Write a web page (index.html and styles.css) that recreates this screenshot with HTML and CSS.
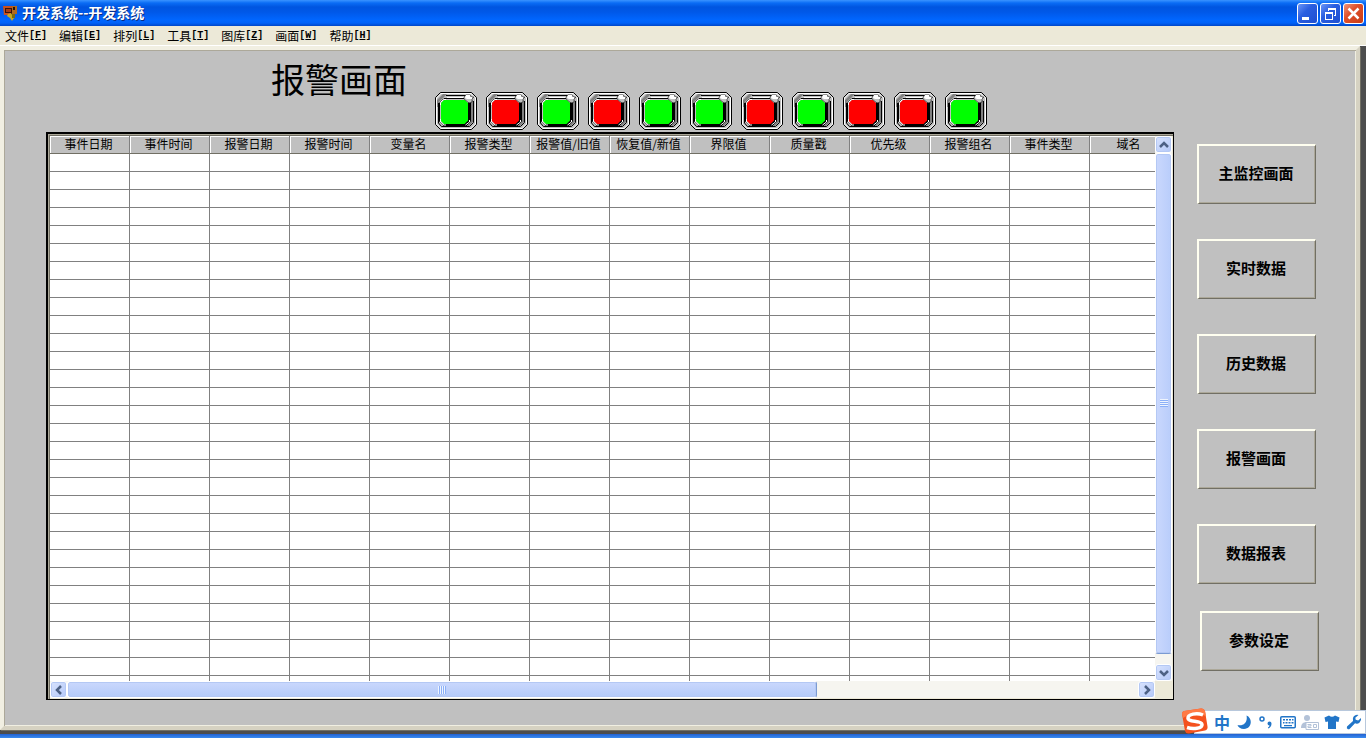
FILE: index.html
```
<!DOCTYPE html>
<html lang="zh-CN">
<head>
  <meta charset="utf-8">
  <meta name="viewport" content="width=device-width, initial-scale=1">
  <title>开发系统--开发系统</title>
  <link rel="stylesheet" href="styles.css">
</head>
<body>
  <svg class="defs" aria-hidden="true">
    <symbol id="lamp" viewBox="0 0 42 38">
      <path d="M5.500.5h31l5 5v27l-5 5h-31l-5-5v-27z" fill="#c0c0c0" stroke="#000"/>
      <path d="M6 1.500h30l4.500 4.500v26L36 36.500H6L1.500 32V6z" fill="none" stroke="#fff"/>
      <path d="M2 8l6-6h4L4 10v5H2z" fill="#808080"/>
      <path d="M36 9l2-1v22l-4 4h-2l4-5z" fill="#808080"/>
      <path d="M11 3.500h20M3.500 11v20l3 3.500h28l4-4V9" fill="none" stroke="#000"/>
      <path d="M12 5.500h18" stroke="#fff"/>
      <path d="M9 6.500h22l4.500 4.500v18.500L31 34H9l-4.500-4.500V11z" fill="#c0c0c0" stroke="#000"/>
      <path d="M9 8h21l3 3v18l-3 3H9l-3-3V11z" fill="currentColor"/>
      <path d="M34 10v19l-4 4H9" fill="none" stroke="#000" stroke-width="2"/>
      <path d="M5.500 13v-2.500l3-3H11M5.500 27v3l3 3H11M34.500 28v2l-4 3" fill="none" stroke="#fff"/>
      <path d="M31 3h4l1.500 2H39l-2 2v3l-3 1-5-4V5z" fill="#c0c0c0" stroke="#000" stroke-width=".5"/>
      <path d="M31 3h4v2h2v2h-5l-2-1z" fill="#fff"/>
    </symbol>
    <symbol id="chevron" viewBox="0 0 10 10">
      <path d="M1 7l4-4 4 4" fill="none" stroke="#4d6185" stroke-width="2.500"/>
    </symbol>
  </svg>

  <header class="titlebar">
    <svg class="app-icon" viewBox="0 0 16 16">
      <path d="M1 1h9v9H1z" fill="#3a1408"/>
      <path d="M0 1h10v2H2v5h6v2H1z" fill="#c8501e"/>
      <path d="M3 4h5v3H3z" fill="#a83c14"/>
      <path d="M9 1h5v8H9z" fill="#b06a20"/>
      <path d="M10 2h2v3h-2z" fill="#2a1008"/>
      <path d="M5 9l3-1 3 5-2 3-2-3-3-2z" fill="#c8a820"/>
      <path d="M9 9h3v4H9z" fill="#7a6a10"/>
    </svg>
    <h1>开发系统--开发系统</h1>
    <div class="window-buttons">
      <button type="button" aria-label="最小化"><svg viewBox="0 0 19 19"><path d="M4 13h7v3H4z" fill="#fff"/></svg></button>
      <button type="button" aria-label="还原"><svg viewBox="0 0 19 19"><path d="M4 8h8v8H4zm1 2v5h6v-5zM7 4h8v8h-2v-1h1V6H8v1H7z" fill="#fff" fill-rule="evenodd"/></svg></button>
      <button type="button" class="close" aria-label="关闭"><svg viewBox="0 0 19 19"><path d="M4.500 4.500l10 10M14.500 4.500l-10 10" fill="none" stroke="#fff" stroke-width="2.500"/></svg></button>
    </div>
  </header>

  <nav class="menubar">
    <button type="button">文件<span>[<u>F</u>]</span></button>
    <button type="button">编辑<span>[<u>E</u>]</span></button>
    <button type="button">排列<span>[<u>L</u>]</span></button>
    <button type="button">工具<span>[<u>T</u>]</span></button>
    <button type="button">图库<span>[<u>Z</u>]</span></button>
    <button type="button">画面<span>[<u>W</u>]</span></button>
    <button type="button">帮助<span>[<u>H</u>]</span></button>
  </nav>

  <div class="workspace">
    <main class="screen">
      <section class="alarms">
        <div class="alarm-head">
          <h2>报警画面</h2>
          <div class="lamps">
            <svg class="lamp on"><use href="#lamp"/></svg>
            <svg class="lamp off"><use href="#lamp"/></svg>
            <svg class="lamp on"><use href="#lamp"/></svg>
            <svg class="lamp off"><use href="#lamp"/></svg>
            <svg class="lamp on"><use href="#lamp"/></svg>
            <svg class="lamp on"><use href="#lamp"/></svg>
            <svg class="lamp off"><use href="#lamp"/></svg>
            <svg class="lamp on"><use href="#lamp"/></svg>
            <svg class="lamp off"><use href="#lamp"/></svg>
            <svg class="lamp off"><use href="#lamp"/></svg>
            <svg class="lamp on"><use href="#lamp"/></svg>
          </div>
        </div>

        <div class="grid-box">
          <div class="grid-view">
            <table>
              <thead>
                <tr>
                  <th>事件日期</th>
                  <th>事件时间</th>
                  <th>报警日期</th>
                  <th>报警时间</th>
                  <th>变量名</th>
                  <th>报警类型</th>
                  <th>报警值/旧值</th>
                  <th>恢复值/新值</th>
                  <th>界限值</th>
                  <th>质量戳</th>
                  <th>优先级</th>
                  <th>报警组名</th>
                  <th>事件类型</th>
                  <th>域名</th>
                </tr>
              </thead>
              <tbody id="alarm-rows"></tbody>
            </table>
          </div>
          <div class="scroll vertical">
            <button type="button" aria-label="向上"><svg><use href="#chevron"/></svg></button>
            <div class="track"><div class="thumb"><i></i></div></div>
            <button type="button" class="down" aria-label="向下"><svg><use href="#chevron"/></svg></button>
          </div>
          <div class="scroll horizontal">
            <button type="button" class="left" aria-label="向左"><svg><use href="#chevron"/></svg></button>
            <div class="track"><div class="thumb"><i></i></div></div>
            <button type="button" class="right" aria-label="向右"><svg><use href="#chevron"/></svg></button>
          </div>
        </div>
      </section>

      <nav class="pages">
        <div class="page-group">
          <button type="button">主监控画面</button>
          <button type="button">实时数据</button>
          <button type="button">历史数据</button>
          <button type="button">报警画面</button>
          <button type="button">数据报表</button>
        </div>
        <div class="page-group settings">
          <button type="button">参数设定</button>
        </div>
      </nav>
    </main>
  </div>

  <div class="taskbar"></div>

  <div class="ime">
    <svg class="ime-logo" viewBox="0 0 28 28">
      <path d="M3 4q-2 .5-2 3l3 17q1 3 4 2.500l16-3q3-1 2.500-4L24 4q-1-3-4-2.500z" fill="#f4511e"/>
      <path d="M3 4L20 1.500q3-.5 4 2.500l1 5Q12 4 2 11l-1-4q0-2.500 2-3z" fill="#ff7a45"/>
      <path d="M22 8C16 5.500 6.500 7 7 11.500c.5 4 13.500 1.500 14 6 .5 4-9 5-15 3" fill="none" stroke="#fff" stroke-width="3.500"/>
    </svg>
    <button type="button" class="lang">中</button>
    <button type="button" aria-label="半角"><svg viewBox="0 0 16 16"><path d="M10.500 1.500C17 4 16 15 8 15 4.500 15 2 13 1.500 11c6 1.500 10.500-3 9-9.500z"/></svg></button>
    <button type="button" aria-label="标点"><svg viewBox="0 0 16 16"><circle cx="4" cy="5" r="2" fill="none" stroke="#2175c8" stroke-width="1.500"/><path d="M9.500 9.500a2 2 0 1 1 4 0c0 2.500-1 4-3.500 5v-1c1-.5 1.500-1.200 1.500-2-1 0-2-1-2-2z"/></svg></button>
    <button type="button" aria-label="软键盘"><svg viewBox="0 0 16 16"><rect x=".75" y="2.750" width="14.500" height="11" rx="1" fill="none" stroke="#2175c8" stroke-width="1.500"/><path d="M3 5h2v1.500H3zM6 5h2v1.500H6zM9 5h2v1.500H9zM12 5h1.500v1.500H12zM3 8h1.500v1.500H3zM5.500 8h2v1.500h-2zM8.500 8h2v1.500h-2zM11.500 8h2v1.500h-2zM4 11h8v1.200H4z"/></svg></button>
    <button type="button" aria-label="账号"><svg class="user" viewBox="0 0 18 16"><circle cx="6" cy="4" r="3"/><path d="M0 14c0-4 2-6 6-6s5 1 5 3v3z"/><path d="M5 8.500h12.500v7H5z" fill="#fff" stroke="#b3c2d8"/><path d="M6.500 10.500h3.500v1.500H7v1.500h3.500M12.500 10.500h3v3h-3z" fill="none" stroke="#b3c2d8"/></svg></button>
    <button type="button" aria-label="皮肤"><svg viewBox="0 0 16 16"><path d="M5 1.500q3 2.500 6 0l4.500 2L14.500 8 12 7.500V15H4V7.500L1.500 8 .5 3.500z"/></svg></button>
    <button type="button" aria-label="工具箱"><svg viewBox="0 0 16 16"><path d="M12.500 1a4.500 4.500 0 0 0-5.500 6L1 12.500q-.8 2 1 2.700 1 .4 1.800-.5L9 9.300A4.500 4.500 0 0 0 15 4l-2.800 2.500-2.500-.7-.4-2z"/></svg></button>
  </div>

  <script src="grid.js"></script>
</body>
</html>
```
FILE: styles.css
```
*, :after, :before { box-sizing: border-box; }
body {
  background: #4d4d4d;
  color: #000;
  display: flex;
  flex-direction: column;
  font-family: "Noto Sans CJK SC", "Liberation Sans", sans-serif;
  font-size: 12px;
  height: 100vh;
  line-height: 16px;
  margin: 0;
  overflow: hidden;
}
button {
  border: 0;
  color: inherit;
  font: inherit;
  margin: 0;
  padding: 0;
}
h1, h2 { margin: 0; }
svg { display: block; }
.defs {
  height: 0;
  position: absolute;
  width: 0;
}

/* title bar */
.titlebar {
  align-items: center;
  background: linear-gradient(#3a93ff 0, #0a6cf5 3px, #0055e0 7px, #0058e8 12px, #0066ff 20px, #0062f8 23px, #0046c8 26px);
  display: flex;
  flex: none;
  height: 26px;
  padding: 0 2px 0 3px;
}
.app-icon {
  height: 16px;
  margin-right: 3px;
  width: 16px;
}
.titlebar h1 {
  color: #fff;
  flex: 1;
  font-size: 14px;
  font-weight: 700;
  line-height: 20px;
  padding-bottom: 2px;
  text-shadow: 1px 1px #0a2a80;
}
.window-buttons {
  display: flex;
  gap: 2px;
}
.window-buttons button {
  background: linear-gradient(135deg, #6a96f8, #2a5ee0 40%, #1e4fd0);
  border: 1px solid #fff;
  border-radius: 3px;
  height: 21px;
  width: 21px;
}
.window-buttons .close { background: linear-gradient(135deg, #f0957a, #e0502c 40%, #c83c14); }

/* menu bar */
.menubar {
  background: #ece9d8;
  display: flex;
  flex: none;
  gap: 12px;
  height: 19px;
  padding: 0 5px;
}
.menubar button {
  background: none;
  display: flex;
  line-height: 19px;
}
.menubar span {
  font-family: "Liberation Mono", monospace;
  font-size: 10px;
  font-weight: 700;
  line-height: 20px;
}

/* picture area */
.workspace {
  border-top: 1px solid #fff;
  display: flex;
  flex: 1;
  min-height: 0;
  padding: 0 6px 4px 0;
}
.screen {
  background: #c0c0c0;
  border: solid;
  border-color: #f1efe2 #d6d2c2 #d6d2c2 #f1efe2;
  border-width: 4px;
  box-shadow: 1px 1px #716f64, inset 1px 1px #aca899, inset -1px -1px #f1efe2;
  display: flex;
  flex: 1;
  gap: 23px;
  min-width: 0;
  padding: 0 37px 26px 42px;
}
.alarms {
  display: flex;
  flex: 1;
  flex-direction: column;
  min-width: 0;
}
.alarm-head {
  display: flex;
  flex: none;
  gap: 28px;
  padding: 12px 0 2px 225px;
}
.alarm-head h2 {
  font-size: 34px;
  font-weight: 400;
  line-height: 34px;
}
.lamps {
  display: flex;
  gap: 9px;
  padding-top: 30px;
}
.lamp {
  height: 38px;
  width: 42px;
}
.lamp.on { color: #0f0; }
.lamp.off { color: #f00; }

.grid-box {
  background: #ece9d8;
  border: solid #000;
  border-width: 2px 1px 1px 2px;
  box-shadow: inset 1px 1px #aca899, inset 2px 2px #716f64;
  display: grid;
  flex: 1;
  grid-template-columns: 1fr 17px;
  grid-template-rows: 1fr 17px;
  min-height: 0;
  padding: 2px 1px 1px 2px;
}
.grid-view {
  background: #fff;
  min-height: 0;
  min-width: 0;
  overflow: hidden;
}
table {
  border-collapse: separate;
  border-spacing: 0;
  table-layout: fixed;
  width: 1120px;
}
th, td {
  border-bottom: 1px solid #808080;
  border-right: 1px solid #808080;
  height: 18px;
  padding: 0;
}
th {
  background: #c0c0c0;
  border-bottom-color: #716f64;
  box-shadow: inset 1px 1px #fff;
  font-weight: 400;
  line-height: 15px;
  padding: 0 2px 2px 0;
  white-space: nowrap;
}

/* scroll bars */
.scroll {
  background: #f6f5f0;
  display: flex;
}
.scroll button, .thumb {
  background: linear-gradient(135deg, #d8e3fe, #b4c8f8);
  border: 1px solid #fff;
  border-radius: 3px;
  box-shadow: inset 0 0 0 1px #b4c8f4;
}
.scroll button {
  align-items: center;
  display: flex;
  flex: none;
  height: 17px;
  justify-content: center;
  width: 17px;
}
.scroll svg {
  height: 10px;
  width: 10px;
}
.scroll .down svg { transform: rotate(180deg); }
.scroll .left svg { transform: rotate(-90deg); }
.scroll .right svg { transform: rotate(90deg); }
.track {
  display: flex;
  flex: 1;
}
.thumb {
  align-items: center;
  display: flex;
  justify-content: center;
}
.vertical, .vertical .track { flex-direction: column; }
.vertical .thumb {
  background: linear-gradient(90deg, #cad8fd, #b9cdfb);
  border-bottom: 1px solid #7b9ad2;
  height: 98%;
}
.horizontal .thumb {
  background: linear-gradient(#cad8fd, #b4caf8);
  border-right: 1px solid #7b9ad2;
  width: 70%;
}
.thumb i {
  height: 8px;
  width: 8px;
}
.vertical i { background: repeating-linear-gradient(#eef4fe 0 1px, #8cb0f8 1px 2px); }
.horizontal i { background: repeating-linear-gradient(90deg, #eef4fe 0 1px, #8cb0f8 1px 2px); }

/* page buttons */
.pages {
  display: flex;
  flex: none;
  flex-direction: column;
  gap: 27px;
  padding-top: 94px;
}
.page-group {
  display: flex;
  flex-direction: column;
  gap: 35px;
}
.page-group.settings { padding-left: 3px; }
.page-group button {
  background: #c0c0c0;
  border: solid;
  border-color: #fffff0 #716f64 #716f64 #fffff0;
  border-width: 2px 1px 1px 2px;
  box-shadow: inset -1px -1px #aca899;
  font-size: 15px;
  font-weight: 700;
  height: 60px;
  padding: 0 2px 4px 0;
  width: 119px;
}

.taskbar {
  background: linear-gradient(#2260d0, #3a8cf0);
  flex: none;
  height: 4px;
}

/* input method bar, floats over everything */
.ime {
  background: #fff;
  border: 1px solid #b8c8dc;
  bottom: 4px;
  display: flex;
  height: 24px;
  padding-left: 16px;
  position: fixed;
  right: 0;
}
.ime-logo {
  height: 28px;
  left: -14px;
  position: absolute;
  top: -4px;
  width: 28px;
}
.ime button {
  align-items: center;
  background: none;
  color: #2175c8;
  display: flex;
  height: 22px;
  justify-content: center;
  width: 22px;
}
.ime button svg {
  fill: #2175c8;
  height: 16px;
  width: 16px;
}
.ime .lang {
  font-size: 16px;
  font-weight: 700;
}
.ime button .user {
  fill: #b3c2d8;
  width: 18px;
}
```
FILE: grid.js
```
const rows = document.getElementById("alarm-rows");
const columns = document.querySelectorAll("thead th").length;

// the list is empty, only the ruled lines are shown
for (let i = 0; i < 60; i++) {
  const row = rows.insertRow();
  for (let j = 0; j < columns; j++) {
    row.insertCell();
  }
}
```
